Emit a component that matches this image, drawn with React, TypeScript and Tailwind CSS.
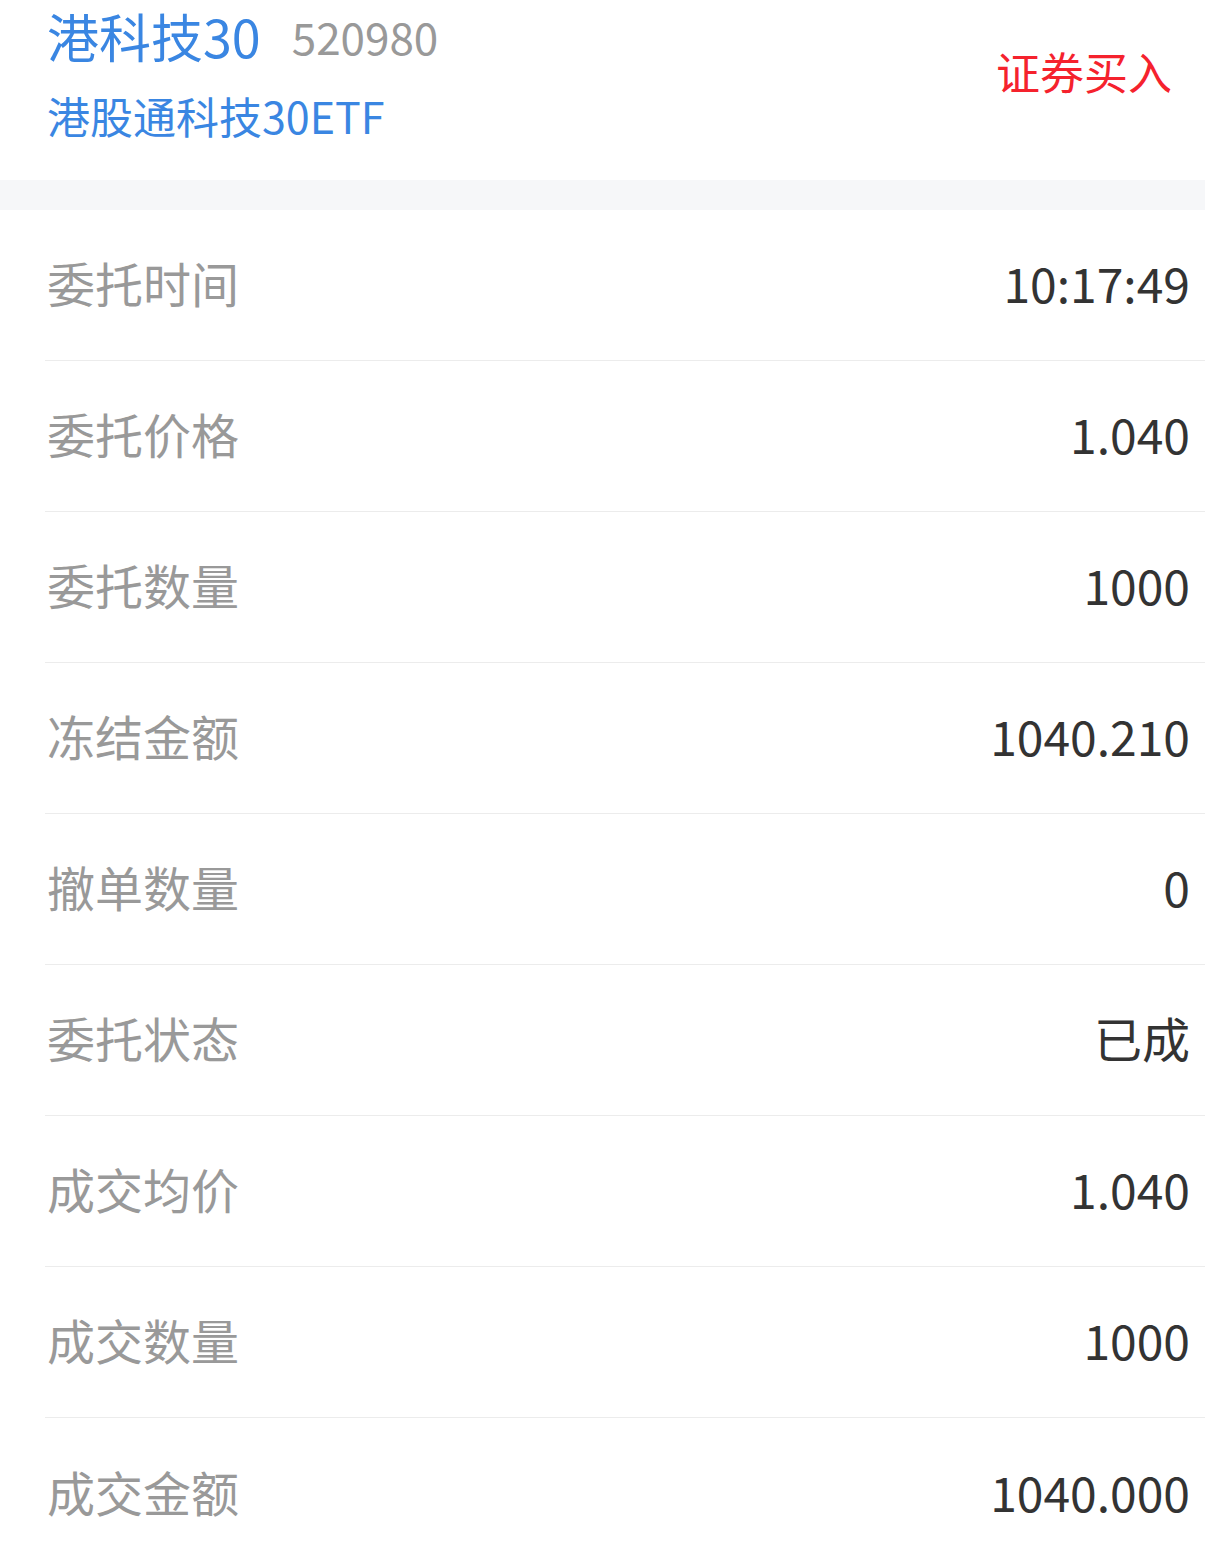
import React from "react";

const rows = [
  { label: "委托时间", value: "10:17:49" },
  { label: "委托价格", value: "1.040" },
  { label: "委托数量", value: "1000" },
  { label: "冻结金额", value: "1040.210" },
  { label: "撤单数量", value: "0" },
  { label: "委托状态", value: "已成" },
  { label: "成交均价", value: "1.040" },
  { label: "成交数量", value: "1000" },
  { label: "成交金额", value: "1040.000" },
];

const App = () => {
  return (
    <div className="min-h-screen bg-white font-['Noto_Sans_CJK_SC',sans-serif]">
      <div className="flex h-[180px] items-start justify-between pl-[47px] pr-[33px]">
        <div className="flex flex-col">
          <div className="flex h-[72px] items-center gap-[31px]">
            <span className="text-[52px] leading-none text-[#3a86e2]">港科技30</span>
            <span className="text-[44px] leading-none text-[#999999]">520980</span>
          </div>
          <span className="mt-[22px] text-[43px] leading-none text-[#3a86e2]">港股通科技30ETF</span>
        </div>
        <span className="mt-[49px] text-[44px] leading-none text-[#f5222d]">证券买入</span>
      </div>
      <div className="h-[30px] bg-[#f6f7f9]" />
      <div className="flex flex-col">
        {rows.map((r, i) => (
          <div key={r.label} className="pl-[45px]">
            <div
              className={
                "flex h-[151px] items-center justify-between pr-[15px] pb-[6px] " +
                (i < rows.length - 1 ? "border-b border-[#ececec]" : "")
              }
            >
              <span className="pl-[2px] text-[48px] text-[#999999]">{r.label}</span>
              <span className="text-[48px] text-[#333333]">{r.value}</span>
            </div>
          </div>
        ))}
      </div>
    </div>
  );
};

export default App;
